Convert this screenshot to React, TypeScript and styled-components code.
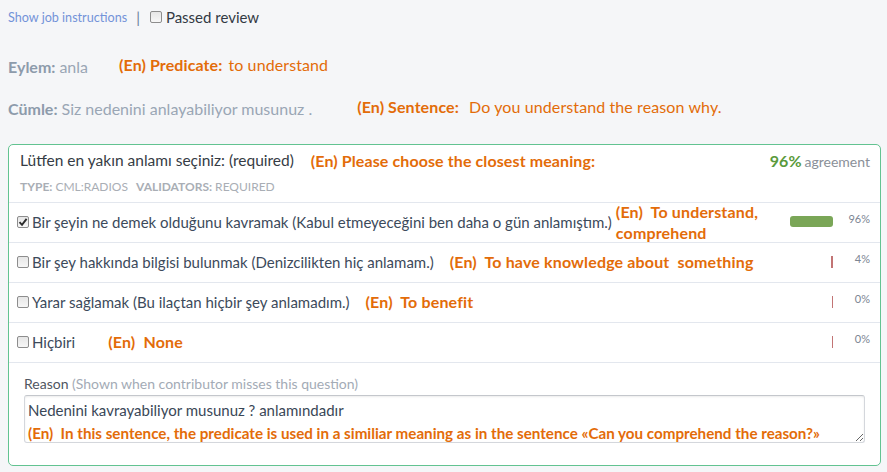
import React from "react";
import styled, { createGlobalStyle } from "styled-components";

const Global = createGlobalStyle`
  html, body { margin: 0; padding: 0; background: #f5f6f8; }
  body { font-family: Lato, "Noto Sans", sans-serif; }
  * { box-sizing: border-box; }
`;

const Page = styled.div`
  width: 887px;
  height: 472px;
  padding: 7px 6px 6px 8px;
  display: flex;
  flex-direction: column;
  overflow: hidden;
`;

const TopBar = styled.div`
  display: flex;
  align-items: center;
  height: 20px;
`;

const Link = styled.a`
  color: #7393d9;
  font-size: 12.6px;
  text-decoration: none;
`;

const Sep = styled.span`
  color: #6b7f9c;
  font-size: 15px;
  margin: 0 10px 0 9px;
`;

const Box = styled.span`
  width: 12px;
  height: 12px;
  border: 1px solid #8d8d8d;
  border-radius: 2px;
  background: linear-gradient(#e6e6e6, #f7f7f7);
  display: inline-flex;
  align-items: center;
  justify-content: center;
  flex: none;
`;

const Check = ({ checked }: { checked?: boolean }) => (
  <Box>
    {checked && (
      <svg width="10" height="10" viewBox="0 0 10 10">
        <path d="M1.5 5.2 L4 7.8 L8.6 1.8" fill="none" stroke="#2c2c2c" strokeWidth="1.9" />
      </svg>
    )}
  </Box>
);

const TopLabel = styled.span`
  color: #333a44;
  font-size: 15px;
  margin-left: 4px;
`;

const Field = styled.div<{ $mt: number }>`
  display: flex;
  align-items: center;
  height: 20px;
  margin-top: ${(p) => p.$mt}px;
  font-size: 16px;
  color: #9aa6b5;
`;

const FieldKey = styled.b`
  color: #8d9bab;
  font-weight: 700;
  margin-right: 4px;
`;

const En = styled.span<{ $ml?: number; $lift?: number }>`
  color: #e36c09;
  font-size: 16px;
  font-weight: 700;
  letter-spacing: 0.1px;
  margin-left: ${(p) => p.$ml ?? 0}px;
  margin-bottom: ${(p) => (p.$lift ?? 0) * 2}px;
  white-space: nowrap;
`;

const EnPlain = styled.span`
  font-weight: 400;
  margin-left: 6px;
`;

const Card = styled.div`
  margin-top: 26px;
  background: #fff;
  border: 1px solid #62c391;
  border-radius: 5px;
  height: 322px;
  display: flex;
  flex-direction: column;
`;

const Header = styled.div`
  padding: 5px 10px 8px 11px;
  border-bottom: 1px solid #e3e7ee;
`;

const TitleRow = styled.div`
  display: flex;
  align-items: center;
  height: 20px;
`;

const Title = styled.span`
  color: #363c45;
  font-size: 15.5px;
`;

const Agreement = styled.span`
  margin-left: auto;
  color: #8a9098;
  font-size: 14px;
  b {
    color: #5a9a3c;
    font-size: 16px;
    font-weight: 700;
    margin-right: 3px;
  }
`;

const Meta = styled.div`
  margin-top: 10px;
  height: 14px;
  line-height: 14px;
  font-size: 12px;
  color: #a9aeb5;
  text-transform: uppercase;
  b { font-weight: 700; margin-right: 3px; }
  span + b { margin-left: 8px; }
`;

const Option = styled.div`
  display: flex;
  align-items: center;
  height: 40px;
  padding: 0 10px 2px 8px;
  border-bottom: 1px solid #e3e7ee;
`;

const OptText = styled.span`
  color: #3c4a5b;
  font-size: 15px;
  margin-left: 3px;
  white-space: nowrap;
`;

const EnBlock = styled.span<{ $ml: number }>`
  color: #e36c09;
  font-size: 16px;
  font-weight: 700;
  letter-spacing: 0.15px;
  margin-left: ${(p) => p.$ml}px;
  line-height: 21px;
  white-space: nowrap;
`;

const BarTrack = styled.div`
  margin-left: auto;
  width: 45px;
  height: 12px;
  display: flex;
  justify-content: flex-end;
  align-items: center;
  margin-right: 1px;
  flex: none;
`;

const Bar = styled.div<{ $good: boolean }>`
  height: ${(p) => (p.$good ? 11 : 12)}px;
  background: ${(p) => (p.$good ? "#7aa657" : "#c27474")};
  border-radius: ${(p) => (p.$good ? 3 : 0)}px;
`;

const Pct = styled.span`
  width: 36px;
  flex: none;
  text-align: right;
  font-size: 11px;
  color: #7c8593;
  margin-top: -6px;
`;

const Reason = styled.div`
  padding: 13px 15px 0 15px;
`;

const ReasonLabel = styled.div`
  font-size: 14px;
  line-height: 16px;
  color: #4f5661;
  span { color: #a3abb6; }
`;

const TextArea = styled.div`
  margin-top: 3px;
  height: 48px;
  border: 1px solid #d4d7dc;
  border-top-color: #c4c7cc;
  border-radius: 3px;
  box-shadow: inset 0 1px 2px rgba(0, 0, 0, 0.08);
  padding: 3px 3px 0 3px;
  overflow: hidden;
  resize: both;
`;

const TALine = styled.div`
  font-size: 15px;
  line-height: 22px;
  color: #3a4757;
`;

const TAEn = styled.div`
  color: #e36c09;
  font-size: 15.2px;
  font-weight: 700;
  line-height: 24px;
  white-space: nowrap;
`;

type Opt = { text: string; en: React.ReactNode; ml: number; pct: number; checked?: boolean };

const options: Opt[] = [
  {
    text: "Bir şeyin ne demek olduğunu kavramak (Kabul etmeyeceğini ben daha o gün anlamıştım.)",
    en: (
      <>
        (En)&nbsp; To understand,
        <br />
        comprehend
      </>
    ),
    ml: 4,
    pct: 96,
    checked: true,
  },
  {
    text: "Bir şey hakkında bilgisi bulunmak (Denizcilikten hiç anlamam.)",
    en: <>(En)&nbsp; To have knowledge about &nbsp;something</>,
    ml: 16,
    pct: 4,
  },
  { text: "Yarar sağlamak (Bu ilaçtan hiçbir şey anlamadım.)", en: <>(En)&nbsp; To benefit</>, ml: 16, pct: 0 },
  { text: "Hiçbiri", en: <>(En)&nbsp; None</>, ml: 33, pct: 0 },
];

export default function App() {
  return (
    <>
      <Global />
      <Page>
        <TopBar>
          <Link>Show job instructions</Link>
          <Sep>|</Sep>
          <Check />
          <TopLabel>Passed review</TopLabel>
        </TopBar>
        <Field $mt={29}>
          <FieldKey>Eylem:</FieldKey>anla
          <En $ml={31} $lift={2}>
            (En) Predicate:<EnPlain>to understand</EnPlain>
          </En>
        </Field>
        <Field $mt={22}>
          <FieldKey>Cümle:</FieldKey>Siz nedenini anlayabiliyor musunuz .
          <En $ml={45} $lift={2}>
            (En) Sentence:<EnPlain>&nbsp;Do you understand the reason why.</EnPlain>
          </En>
        </Field>
        <Card>
          <Header>
            <TitleRow>
              <Title>Lütfen en yakın anlamı seçiniz: (required)</Title>
              <En $ml={17}>(En) Please choose the closest meaning:</En>
              <Agreement>
                <b>96%</b>agreement
              </Agreement>
            </TitleRow>
            <Meta>
              <b>Type:</b>
              <span>cml:radios</span>
              <b>Validators:</b>
              <span>required</span>
            </Meta>
          </Header>
          {options.map((o, i) => (
            <Option key={i}>
              <Check checked={o.checked} />
              <OptText>{o.text}</OptText>
              <EnBlock $ml={o.ml}>{o.en}</EnBlock>
              <BarTrack>
                <Bar
                  $good={o.pct > 50}
                  style={{ width: `${Math.max(o.pct > 0 ? 2 : 1.5, Math.round((o.pct * 45) / 100))}px` }}
                />
              </BarTrack>
              <Pct>{o.pct}%</Pct>
            </Option>
          ))}
          <Reason>
            <ReasonLabel>
              Reason <span>(Shown when contributor misses this question)</span>
            </ReasonLabel>
            <TextArea>
              <TALine>Nedenini kavrayabiliyor musunuz ? anlamındadır</TALine>
              <TAEn>
                (En)&nbsp; In this sentence, the predicate is used in a similiar meaning as in the sentence «Can you
                comprehend the reason?»
              </TAEn>
            </TextArea>
          </Reason>
        </Card>
      </Page>
    </>
  );
}
